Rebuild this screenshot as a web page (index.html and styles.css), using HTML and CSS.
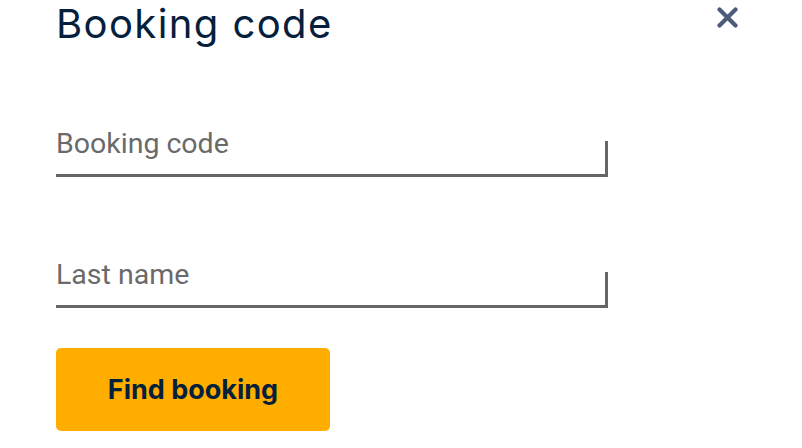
FILE: index.html
```html
<!DOCTYPE html>
<html lang="en">
<head>
<meta charset="utf-8">
<title>Booking code</title>
<link rel="stylesheet" href="styles.css">
</head>
<body>
<div class="dialog">
  <header class="header">
    <h1 class="title">Booking code</h1>
    <button class="close" aria-label="Close">
      <svg width="21" height="21" viewBox="0 0 21 21"><path d="M2.5 2.5 L18.5 18.5 M18.5 2.5 L2.5 18.5" stroke="currentColor" stroke-width="4.2" stroke-linecap="round" fill="none"/></svg>
    </button>
  </header>
  <form class="form">
    <label class="field field-first"><span class="label">Booking code</span></label>
    <label class="field field-second"><span class="label">Last name</span></label>
    <button type="button" class="submit">Find booking</button>
  </form>
</div>
</body>
</html>
```
FILE: styles.css
```css
html, body {
  margin: 0;
  padding: 0;
  background: #ffffff;
}
.dialog {
  padding: 0 64px 0 56px;
  font-family: Inter, "Noto Sans", sans-serif;
}
.header {
  display: flex;
  justify-content: space-between;
  align-items: flex-start;
  height: 48px;
}
.title {
  margin: 0;
  font-size: 40px;
  line-height: 48px;
  font-weight: 400;
  color: #05203c;
  letter-spacing: 1.4px;
}
.close {
  margin-top: 7px;
  padding: 0;
  border: none;
  background: none;
  width: 21px;
  height: 21px;
  color: #4b5b78;
  display: flex;
}
.form {
  display: flex;
  flex-direction: column;
  align-items: flex-start;
}
.field {
  position: relative;
  display: block;
  width: 552px;
  box-sizing: border-box;
  border-bottom: 3px solid #666666;
  padding: 0 0 14px 0;
}
.field::after {
  content: "";
  position: absolute;
  right: 0;
  bottom: -3px;
  width: 3px;
  height: 36px;
  background: #666666;
}
.field-first {
  margin-top: 80px;
}
.field-second {
  margin-top: 82px;
}
.label {
  display: block;
  font-family: Roboto, "Liberation Sans", sans-serif;
  font-size: 28.5px;
  line-height: 32px;
  color: #6a6a6a;
}
.submit {
  margin-top: 40px;
  width: 274px;
  height: 83px;
  border: none;
  border-radius: 5px;
  background: #ffae00;
  color: #05203c;
  font-family: Inter, "Noto Sans", sans-serif;
  font-weight: 700;
  font-size: 27px;
  padding: 0;
}
```
